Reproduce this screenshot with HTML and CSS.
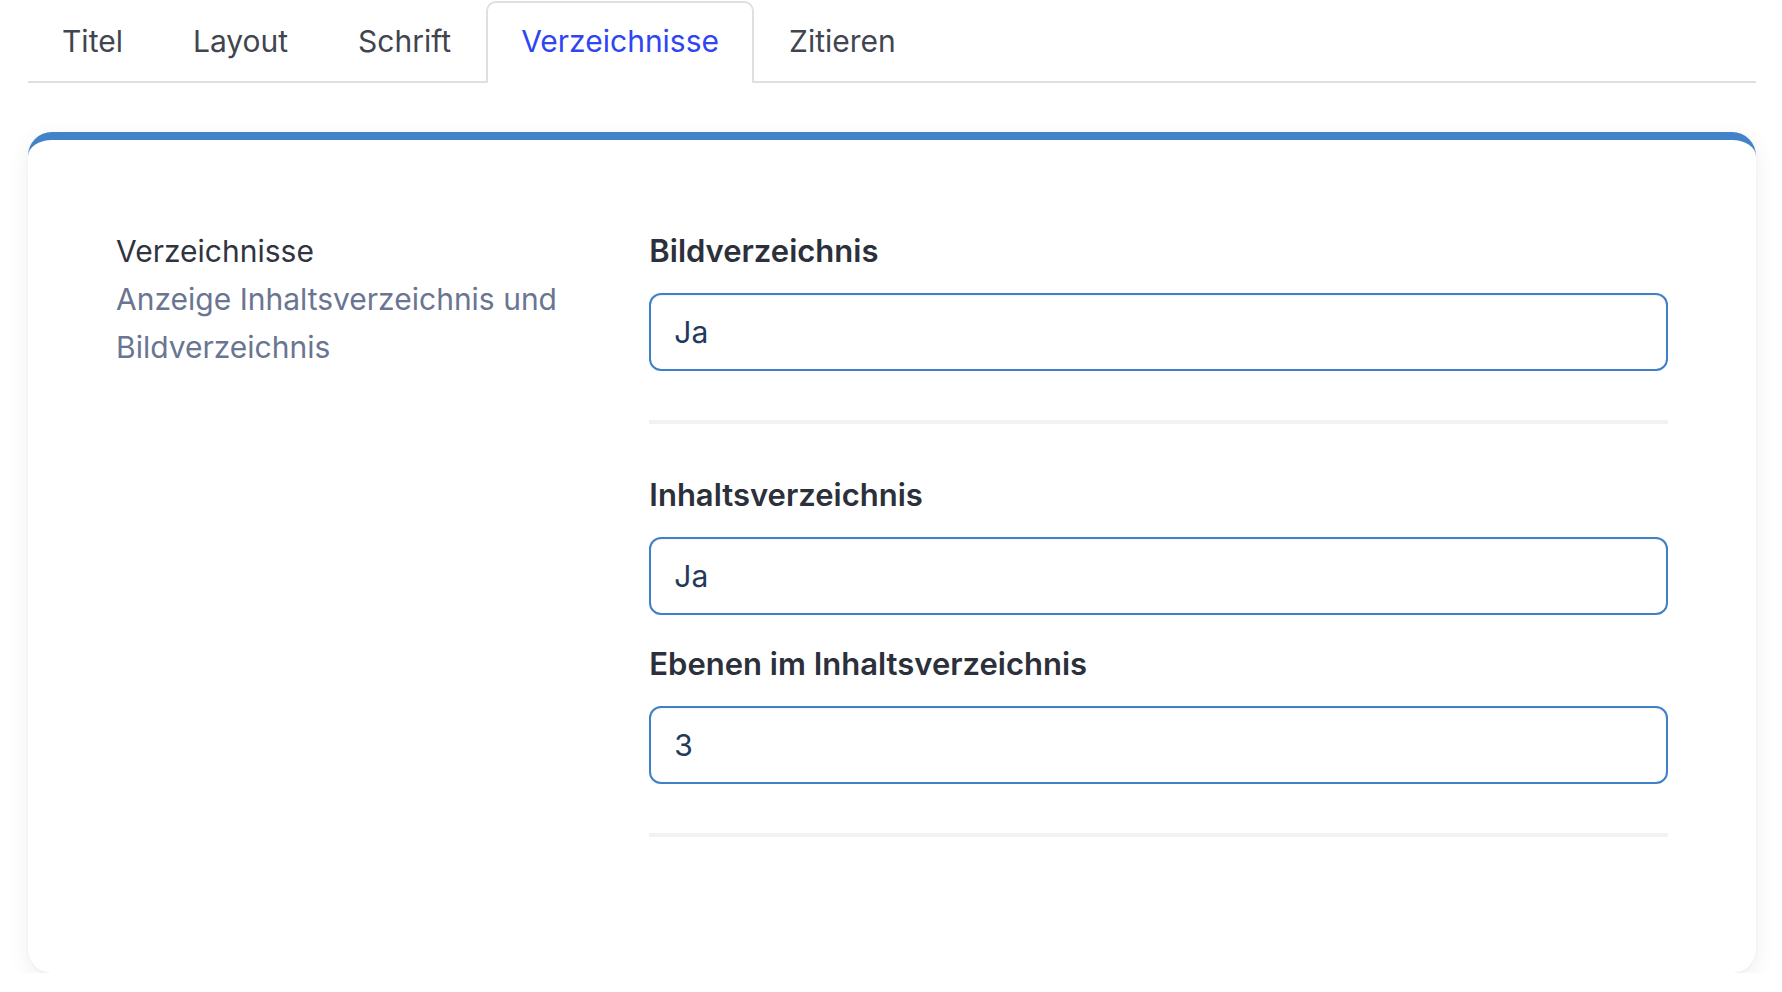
FILE: index.html
```html
<!DOCTYPE html>
<html lang="de">
<head>
<meta charset="utf-8">
<title>Verzeichnisse</title>
<link rel="stylesheet" href="styles.css">
</head>
<body>
<div class="page">
  <nav class="tabs">
    <a class="tab">Titel</a>
    <a class="tab">Layout</a>
    <a class="tab">Schrift</a>
    <a class="tab active">Verzeichnisse</a>
    <a class="tab">Zitieren</a>
  </nav>

  <section class="card">
    <div class="intro">
      <h3 class="intro-title">Verzeichnisse</h3>
      <p class="intro-desc">Anzeige Inhaltsverzeichnis und Bildverzeichnis</p>
    </div>
    <div class="fields">
      <div class="group">
        <div class="field">
          <label class="label">Bildverzeichnis</label>
          <input class="input" type="text" value="Ja" readonly>
        </div>
      </div>
      <div class="group">
        <div class="field">
          <label class="label">Inhaltsverzeichnis</label>
          <input class="input" type="text" value="Ja" readonly>
        </div>
        <div class="field">
          <label class="label">Ebenen im Inhaltsverzeichnis</label>
          <input class="input" type="text" value="3" readonly>
        </div>
      </div>
    </div>
  </section>
</div>
</body>
</html>
```

FILE: styles.css
```css
* { box-sizing: border-box; }

html, body {
  margin: 0;
  padding: 0;
  background: #ffffff;
}

body {
  font-family: Inter, "Noto Sans", "Liberation Sans", sans-serif;
  color: #2b303a;
}

.page {
  padding: 1px 26px 0 28px;
}

.tabs {
  display: flex;
  border-bottom: 2px solid #dcdfe4;
}

.tab {
  display: block;
  padding: 18px 33px 20px 33px;
  font-size: 30px;
  line-height: 40px;
  color: #41454f;
  border: 2px solid transparent;
  border-bottom: none;
  border-radius: 10px 10px 0 0;
  margin-bottom: -2px;
}

.tab:first-child {
  padding-left: 32px;
}

.tab.active {
  color: #2f45f2;
  border-color: #dcdfe4;
  background: #fff;
  padding-bottom: 22px;
}

.card {
  margin-top: 49px;
  background: #fff;
  border-top: 8px solid #4282c8;
  border-radius: 24px;
  box-shadow: 0 6px 22px rgba(0, 0, 0, 0.07), 0 1px 3px rgba(0, 0, 0, 0.04);
  padding: 87px 88px 136px 88px;
  display: grid;
  grid-template-columns: 1fr 2fr;
  column-gap: 24px;
}

.intro-title {
  margin: 0;
  font-size: 30px;
  line-height: 48px;
  font-weight: 400;
  color: #2f3440;
}

.intro-desc {
  margin: 0;
  font-size: 30px;
  line-height: 48px;
  color: #6a7591;
}

.group {
  border-bottom: 4px solid #f1f2f4;
  padding-bottom: 49px;
  padding-top: 47px;
}

.group:first-child {
  padding-top: 0;
}

.field {
  display: flex;
  flex-direction: column;
}

.field + .field {
  margin-top: 25px;
}

.label {
  font-size: 31px;
  line-height: 48px;
  font-weight: 600;
  color: #2b303a;
  margin-bottom: 18px;
}

.input {
  display: block;
  width: 100%;
  height: 78px;
  border: 2px solid #3f80c8;
  border-radius: 12px;
  padding: 0 23px;
  font-family: Inter, "Noto Sans", "Liberation Sans", sans-serif;
  font-size: 30px;
  color: #1f3a5c;
  background: #fff;
  box-shadow: inset 0 1px 2px rgba(0, 0, 0, 0.05);
  outline: none;
}
```
